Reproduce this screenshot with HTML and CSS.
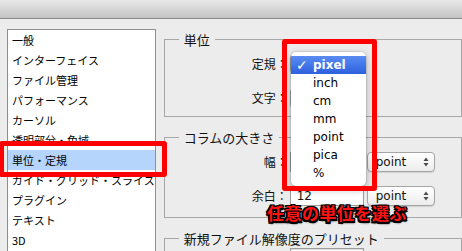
FILE: index.html
```html
<!DOCTYPE html>
<html lang="ja">
<head>
    <meta charset="UTF-8">
    <meta name="viewport" content="width=device-width, initial-scale=1.0">
    <title>環境設定 - 単位・定規</title>
    <link rel="stylesheet" href="styles.css">
</head>
<body>
    <div class="window">
        <div class="titlebar"></div>

        <div class="main">
            <ul class="sidebar">
                <li>一般</li>
                <li>インターフェイス</li>
                <li>ファイル管理</li>
                <li>パフォーマンス</li>
                <li>カーソル</li>
                <li>透明部分・色域</li>
                <li class="selected">単位・定規</li>
                <li>ガイド・グリッド・スライス</li>
                <li>プラグイン</li>
                <li>テキスト</li>
                <li>3D</li>
            </ul>

            <div class="panel">
                <fieldset class="group group-units">
                    <legend>単位</legend>
                    <div class="row">
                        <label>定規：</label>
                        <div class="popup"><span class="hidden-value">pixel</span><svg class="arrows" width="6" height="10" viewBox="0 0 6 10"><path d="M3 0.5 L5.5 4 H0.5Z M3 9.5 L5.5 6 H0.5Z"/></svg></div>
                    </div>
                    <div class="row">
                        <label>文字：</label>
                        <div class="popup"><span class="hidden-value">point</span><svg class="arrows" width="6" height="10" viewBox="0 0 6 10"><path d="M3 0.5 L5.5 4 H0.5Z M3 9.5 L5.5 6 H0.5Z"/></svg></div>
                    </div>
                </fieldset>

                <fieldset class="group group-column">
                    <legend>コラムの大きさ</legend>
                    <div class="row">
                        <label>幅：</label>
                        <div class="field"></div>
                        <div class="popup popup-small">point<svg class="arrows" width="6" height="10" viewBox="0 0 6 10"><path d="M3 0.5 L5.5 4 H0.5Z M3 9.5 L5.5 6 H0.5Z"/></svg></div>
                    </div>
                    <div class="row">
                        <label>余白：</label>
                        <div class="field">12</div>
                        <div class="popup popup-small">point<svg class="arrows" width="6" height="10" viewBox="0 0 6 10"><path d="M3 0.5 L5.5 4 H0.5Z M3 9.5 L5.5 6 H0.5Z"/></svg></div>
                    </div>
                </fieldset>

                <fieldset class="group group-preset">
                    <legend>新規ファイル解像度のプリセット</legend>
                    <div class="row row-tight">
                        <label></label>
                        <div class="field"></div>
                    </div>
                </fieldset>
            </div>
        </div>

        <!-- open popup menu for 定規 -->
        <ul class="menu">
            <li class="checked"><span class="check">✓</span>pixel</li>
            <li>inch</li>
            <li>cm</li>
            <li>mm</li>
            <li>point</li>
            <li>pica</li>
            <li>%</li>
        </ul>

        <!-- annotations -->
        <div class="mark mark-list"></div>
        <div class="mark mark-menu"></div>
        <p class="note">任意の単位を選ぶ</p>
    </div>
</body>
</html>
```

FILE: styles.css
```css
body {
    margin: 0;
    font-family: "Noto Sans CJK JP", "DejaVu Sans", sans-serif;
    color: #111;
}
.window {
    position: relative;
    width: 462px;
    height: 251px;
    overflow: hidden;
    background: #ececec;
}
.titlebar {
    height: 18px;
    border-bottom: 1px solid #8a8a8a;
    background: linear-gradient(#e8e8e8, #c4c4c4);
}
.main {
    display: flex;
    align-items: flex-start;
    padding-top: 10px;
}

/* category list */
.sidebar {
    margin: 0 0 0 7px;
    padding: 0;
    list-style: none;
    width: 155px;
    height: 240px;
    background: #fff;
    border: 1px solid #8f8f8f;
}
.sidebar li {
    height: 20px;
    line-height: 20px;
    padding-left: 4px;
    font-size: 11px;
    white-space: nowrap;
    color: #000;
}
.sidebar li.selected {
    background: #b5d5fd;
}

/* settings */
.panel {
    display: flex;
    flex-direction: column;
    margin-left: 8px;
    width: 320px;
}
.group {
    margin: 12px 0 0 0;
    padding: 0 0 9px 14px;
    border: 1px solid #a8a8a8;
    min-width: 0;
}
.group-units {
    margin-top: 2px;
    padding-bottom: 8px;
}
.group-column {
    padding-bottom: 11px;
}
.group legend {
    padding: 0 5px;
    font-size: 13px;
    line-height: 17px;
}
.row {
    display: flex;
    align-items: center;
    height: 20px;
    margin-top: 14px;
}
.row:first-of-type {
    margin-top: 6px;
}
.row-tight:first-of-type {
    margin-top: 1px;
}
.row label {
    width: 109px;
    text-align: right;
    font-size: 12px;
    line-height: 20px;
}
.field {
    box-sizing: border-box;
    margin-left: 2px;
    width: 74px;
    height: 20px;
    padding-left: 6px;
    border: 1px solid #9c9c9c;
    background: #fff;
    box-shadow: inset 0 1px 1px rgba(0, 0, 0, 0.15);
    font: 12px/18px "DejaVu Sans", sans-serif;
}
.popup {
    box-sizing: border-box;
    display: flex;
    align-items: center;
    justify-content: space-between;
    margin-left: 2px;
    width: 74px;
    height: 20px;
    padding: 0 5px 0 8px;
    border: 1px solid #a5a5a5;
    border-radius: 4px;
    background: linear-gradient(#ffffff, #ececec);
    box-shadow: 0 1px 1px rgba(0, 0, 0, 0.12);
    font: 12px/18px "DejaVu Sans", sans-serif;
}
.popup-small {
    margin-left: 3px;
    width: 68px;
}
.hidden-value {
    visibility: hidden;
}
.arrows path {
    fill: #4a4a4a;
}

/* menu */
.menu {
    position: absolute;
    left: 291px;
    top: 52px;
    width: 75px;
    margin: 0;
    padding: 4px 0;
    list-style: none;
    border-radius: 5px;
    background: #fff;
    box-shadow: 0 3px 9px rgba(0, 0, 0, 0.3), 0 0 0 1px rgba(0, 0, 0, 0.08);
}
.menu li {
    position: relative;
    height: 18px;
    padding-left: 22px;
    font: 12px/18px "DejaVu Sans", sans-serif;
    color: #000;
}
.menu li.checked {
    color: #fff;
    font-weight: bold;
    background: linear-gradient(#5a8cf3, #2c60dd);
}
.check {
    position: absolute;
    left: 5px;
    font-size: 14px;
    font-weight: bold;
}

/* red annotations */
.mark {
    position: absolute;
    box-sizing: border-box;
    border: 5px solid #fe0000;
    border-radius: 3px;
}
.mark-list {
    left: -1px;
    top: 141px;
    width: 168px;
    height: 36px;
}
.mark-menu {
    left: 282px;
    top: 39px;
    width: 95px;
    height: 152px;
}
.note {
    position: absolute;
    left: 267px;
    top: 203px;
    margin: 0;
    font-size: 17px;
    line-height: 20px;
    font-weight: 700;
    letter-spacing: 0.5px;
    color: #ff1414;
    text-shadow: -1.5px -1.5px 0 #000, 1.5px -1.5px 0 #000, -1.5px 1.5px 0 #000, 1.5px 1.5px 0 #000,
                 0 -1.5px 0 #000, 0 1.5px 0 #000, -1.5px 0 0 #000, 1.5px 0 0 #000, 1px 2px 2px #000;
}
```
